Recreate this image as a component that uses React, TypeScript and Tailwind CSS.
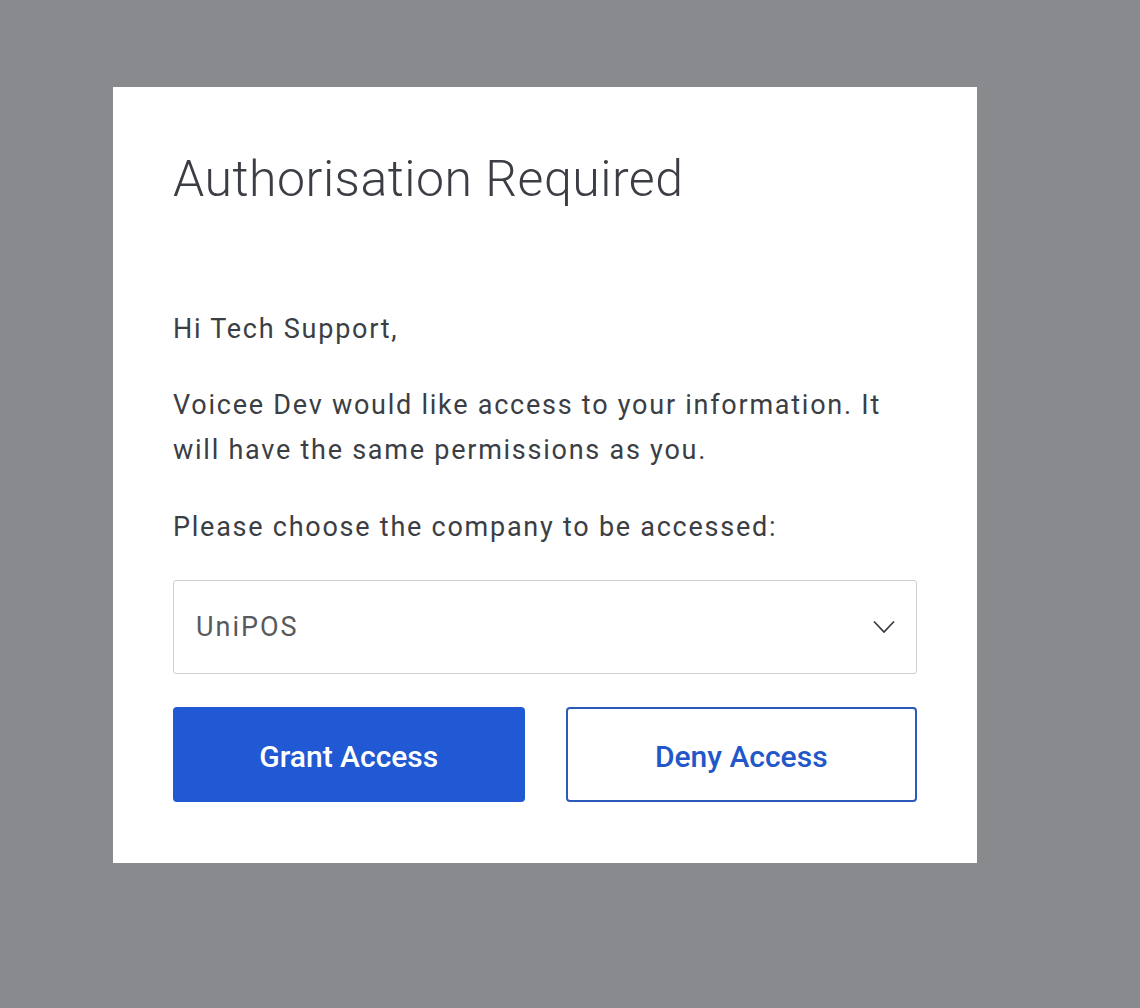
import * as React from 'react'

// ── Select chevron ───────────────────────────────────────────────────────────
function Chevron() {
  return (
    <svg width="22" height="14" viewBox="0 0 22 14" fill="none" className="shrink-0">
      <path d="M1 1.5 L11 12 L21 1.5" stroke="#35383d" strokeWidth="1.7" />
    </svg>
  )
}

export default function App() {
  const [company, setCompany] = React.useState('UniPOS')

  return (
    <div className="min-h-screen w-full bg-[#898a8e] pt-[87px] pl-[113px] font-['Roboto',sans-serif] text-[#3b3e44]">
      <div className="w-[864px] bg-white px-[60px] pt-[62px] pb-[61px]">
        <h1 className="text-[50px] leading-[60px] font-light tracking-[0.5px]">Authorisation Required</h1>

        <div className="mt-[98px] text-[27px] leading-[45px] tracking-[1.75px]">
          <p>Hi Tech Support,</p>
          <p className="mt-[31px]">
            Voicee Dev would like access to your information. It will have the same permissions as you.
          </p>
          <p className="mt-[32px]">Please choose the company to be accessed:</p>
        </div>

        <div className="mt-[30px] relative flex items-center h-[94px] rounded-[3px] border border-[#cfcfcf] pl-[22px] pr-[21px]">
          <span className="flex-1 pt-[1px] text-[27px] tracking-[2px] text-[#58595c]">{company}</span>
          <Chevron />
          <select
            value={company}
            onChange={e => setCompany(e.target.value)}
            className="absolute inset-0 opacity-0 cursor-pointer"
          >
            <option>UniPOS</option>
          </select>
        </div>

        <div className="mt-[33px] grid grid-cols-2 gap-[41px]">
          <button
            type="button"
            className="h-[95px] pt-[3px] rounded-[4px] bg-[#2059d3] text-white text-[30px] font-medium"
          >
            Grant Access
          </button>
          <button
            type="button"
            className="h-[95px] pt-[3px] rounded-[4px] border-2 border-[#2b5ab8] bg-white text-[#2157c9] text-[30px] font-medium"
          >
            Deny Access
          </button>
        </div>
      </div>
    </div>
  )
}
